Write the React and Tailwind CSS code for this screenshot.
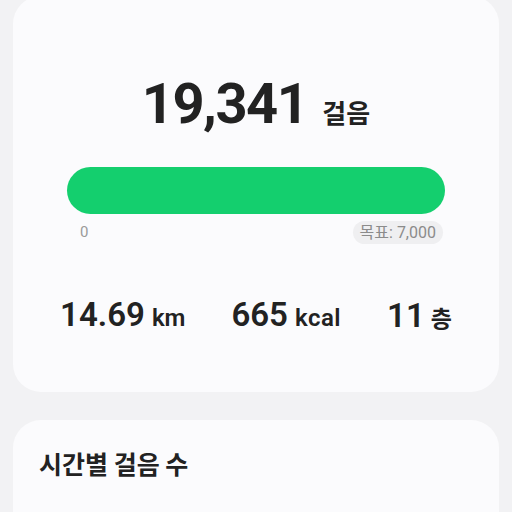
export default function App() {
  const font = { fontFamily: 'Roboto, "Noto Sans CJK KR", sans-serif' }
  const kr = { fontFamily: '"Noto Sans CJK KR", sans-serif' }
  return (
    <div className="w-[512px] h-[512px] overflow-hidden bg-[#f2f2f4] px-[13px] text-[#222222]" style={font}>
      {/* Summary card */}
      <div className="-mt-[4px] bg-[#fbfbfd] rounded-[28px] pt-[80px] pb-[56px] px-[54px]">
        <div className="flex items-baseline justify-center">
          <span className="text-[56px] leading-none font-bold tracking-[-1.5px]">19,341</span>
          <span className="ml-[15px] text-[26px] font-bold" style={kr}>걸음</span>
        </div>
        <div className="mt-[35px] h-[47px] rounded-full bg-[#14cf6e]" />
        <div className="mt-[7px] flex items-center justify-between pl-[13px] pr-[2px]">
          <span className="text-[15px] text-[#9a9a9a]">0</span>
          <span className="rounded-full bg-[#efeff1] px-[7px] h-[23px] flex items-center text-[16px] text-[#8b8b8b]">목표: 7,000</span>
        </div>
        <div className="mt-[54px] -mx-[20px] flex items-center justify-center">
          <div className="px-[23px] flex items-baseline">
            <span className="text-[33px] leading-none font-semibold">14.69</span>
            <span className="ml-[7px] text-[24px] font-semibold">km</span>
          </div>
          <div className="w-px h-[29px] bg-[#e9e9eb]" />
          <div className="px-[23px] flex items-baseline">
            <span className="text-[33px] leading-none font-semibold">665</span>
            <span className="ml-[7px] text-[24px] font-semibold tracking-[0.5px]">kcal</span>
          </div>
          <div className="w-px h-[29px] bg-[#e9e9eb]" />
          <div className="px-[23px] flex items-baseline">
            <span className="text-[33px] leading-none font-semibold">11</span>
            <span className="ml-[6px] text-[23px] font-semibold" style={kr}>층</span>
          </div>
        </div>
      </div>

      {/* Hourly steps card */}
      <div className="mt-[28px] bg-[#fbfbfd] rounded-[28px] pt-[31px] px-[26px] h-[200px]">
        <h2 className="text-[25px] font-bold leading-none" style={kr}>시간별 걸음 수</h2>
      </div>
    </div>
  )
}
